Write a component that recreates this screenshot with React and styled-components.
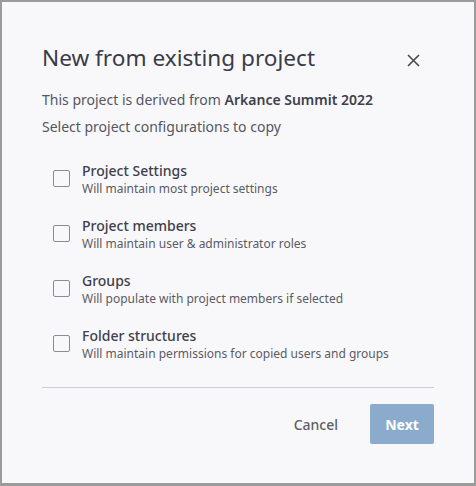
import styled, { createGlobalStyle } from 'styled-components';

const GlobalStyle = createGlobalStyle`
  html, body {
    margin: 0;
    padding: 0;
    background: #9b9b9b;
  }
  body {
    font-family: "Noto Sans", "Open Sans", sans-serif;
  }
`;

const Frame = styled.div`
  width: 476px;
  height: 486px;
  box-sizing: border-box;
  padding: 2px 2px 3px 2px;
  background: #9b9b9b;
`;

const Dialog = styled.div`
  height: 100%;
  box-sizing: border-box;
  background: #f8f8fa;
  padding: 38px 40px 0 40px;
  display: flex;
  flex-direction: column;
`;

const Header = styled.div`
  display: flex;
  align-items: center;
  justify-content: space-between;
`;

const Title = styled.h1`
  margin: 0;
  font-size: 22.6px;
  font-weight: 400;
  color: #3a3b48;
  line-height: 36px;
`;

const CloseButton = styled.button`
  border: none;
  background: none;
  padding: 0;
  margin: 4px 13px 0 0;
  width: 16px;
  height: 16px;
  display: flex;
  align-items: center;
  justify-content: center;
  cursor: pointer;
  color: #45464f;
`;

const Intro = styled.p`
  margin: ${p => p.$top}px 0 0 0;
  font-size: 14px;
  line-height: 20px;
  color: #555660;
`;

const Strong = styled.span`
  font-weight: 600;
  color: #3f404b;
`;

const Options = styled.div`
  display: flex;
  flex-direction: column;
  gap: 19px;
  margin-top: 24px;
  padding-left: 11px;
`;

const Option = styled.label`
  display: flex;
  align-items: flex-start;
  gap: 12px;
  cursor: pointer;
`;

const Box = styled.span`
  flex: none;
  width: 15px;
  height: 15px;
  margin-top: 9px;
  border: 1.5px solid #8b8c93;
  border-radius: 2px;
`;

const OptionText = styled.div`
  display: flex;
  flex-direction: column;
`;

const OptionTitle = styled.span`
  font-size: 14px;
  font-weight: 500;
  line-height: 20px;
  color: #3f404b;
`;

const OptionDesc = styled.span`
  font-size: 12px;
  line-height: 16px;
  color: #5a5b64;
`;

const Divider = styled.hr`
  margin: 25px 0 0 0;
  border: none;
  border-top: 1px solid #cfcfd3;
`;

const Footer = styled.div`
  display: flex;
  justify-content: flex-end;
  align-items: center;
  gap: 32px;
  margin-top: 16px;
`;

const TextButton = styled.button`
  border: none;
  background: none;
  padding: 0;
  font-family: inherit;
  font-size: 14px;
  font-weight: 500;
  color: #5c5d66;
`;

const PrimaryButton = styled.button`
  border: none;
  border-radius: 2px;
  width: 64px;
  height: 40px;
  background: #8aabcc;
  color: #ffffff;
  font-family: inherit;
  font-size: 14px;
  font-weight: 700;
`;

const options = [
  { title: 'Project Settings', desc: 'Will maintain most project settings' },
  { title: 'Project members', desc: 'Will maintain user & administrator roles' },
  { title: 'Groups', desc: 'Will populate with project members if selected' },
  { title: 'Folder structures', desc: 'Will maintain permissions for copied users and groups' },
];

export default function App() {
  return (
    <>
      <GlobalStyle />
      <Frame>
        <Dialog>
          <Header>
            <Title>New from existing project</Title>
            <CloseButton aria-label="Close">
              <svg width="13" height="13" viewBox="0 0 13 13">
                <path d="M1 1 L12 12 M12 1 L1 12" stroke="currentColor" strokeWidth="1.6" fill="none" />
              </svg>
            </CloseButton>
          </Header>
          <Intro $top={14}>
            This project is derived from <Strong>Arkance Summit 2022</Strong>
          </Intro>
          <Intro $top={7}>Select project configurations to copy</Intro>
          <Options>
            {options.map(o => (
              <Option key={o.title}>
                <Box />
                <OptionText>
                  <OptionTitle>{o.title}</OptionTitle>
                  <OptionDesc>{o.desc}</OptionDesc>
                </OptionText>
              </Option>
            ))}
          </Options>
          <Divider />
          <Footer>
            <TextButton>Cancel</TextButton>
            <PrimaryButton>Next</PrimaryButton>
          </Footer>
        </Dialog>
      </Frame>
    </>
  );
}
